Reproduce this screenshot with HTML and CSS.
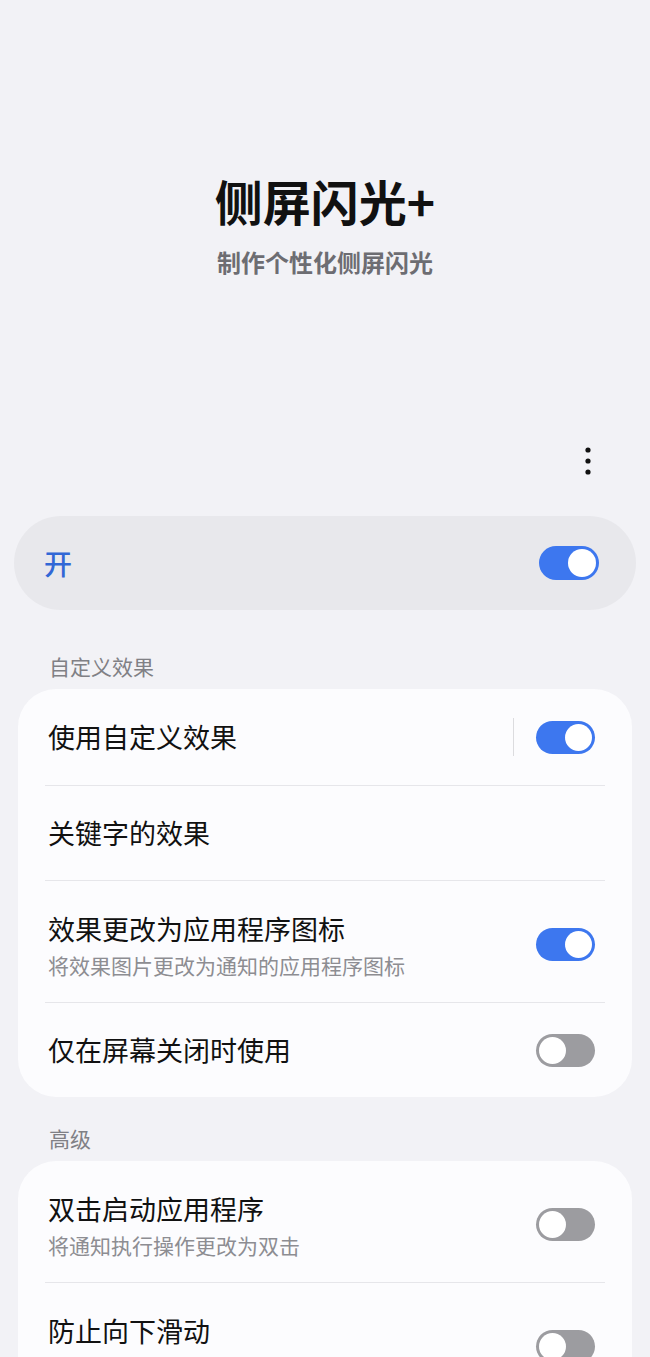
FILE: index.html
```html
<!DOCTYPE html>
<html lang="zh-CN">
<head>
  <meta charset="UTF-8">
  <meta name="viewport" content="width=device-width, initial-scale=1.0">
  <title>侧屏闪光+</title>
  <link rel="stylesheet" href="styles.css">
</head>
<body>
  <div class="hero">
    <h1>侧屏闪光+</h1>
    <p class="tagline">制作个性化侧屏闪光</p>
  </div>

  <div class="toolbar">
    <button class="more" aria-label="更多选项">
      <svg width="8" height="28" viewBox="0 0 8 28">
        <circle cx="4" cy="3" r="2.6" fill="#111"/>
        <circle cx="4" cy="14" r="2.6" fill="#111"/>
        <circle cx="4" cy="25" r="2.6" fill="#111"/>
      </svg>
    </button>
  </div>

  <div class="master">
    <span class="master-label">开</span>
    <span class="switch switch-big on"></span>
  </div>

  <div class="section-title">自定义效果</div>
  <div class="card">
    <div class="row">
      <div class="row-text">
        <div class="row-title">使用自定义效果</div>
      </div>
      <span class="split"></span>
      <span class="switch on"></span>
    </div>
    <div class="row">
      <div class="row-text">
        <div class="row-title">关键字的效果</div>
      </div>
    </div>
    <div class="row two">
      <div class="row-text">
        <div class="row-title">效果更改为应用程序图标</div>
        <div class="row-sub">将效果图片更改为通知的应用程序图标</div>
      </div>
      <span class="switch on"></span>
    </div>
    <div class="row">
      <div class="row-text">
        <div class="row-title">仅在屏幕关闭时使用</div>
      </div>
      <span class="switch"></span>
    </div>
  </div>

  <div class="section-title">高级</div>
  <div class="card">
    <div class="row two">
      <div class="row-text">
        <div class="row-title">双击启动应用程序</div>
        <div class="row-sub">将通知执行操作更改为双击</div>
      </div>
      <span class="switch"></span>
    </div>
    <div class="row two">
      <div class="row-text">
        <div class="row-title">防止向下滑动</div>
        <div class="row-sub">防止通知在屏幕上向下滑动</div>
      </div>
      <span class="switch"></span>
    </div>
  </div>
</body>
</html>
```

FILE: styles.css
```css
body {
  font-family: "Noto Sans CJK SC", "Noto Sans", sans-serif;
  margin: 0;
  background: #f2f2f6;
  color: #111;
  padding-bottom: 40px;
}
.hero {
  padding-top: 171px;
  text-align: center;
}
h1 {
  font-size: 48px;
  line-height: 58px;
  font-weight: 700;
  margin: 0;
}
.tagline {
  font-size: 24px;
  line-height: 30px;
  font-weight: 700;
  color: #6d6d72;
  margin: 18px 0 0;
}
.toolbar {
  display: flex;
  justify-content: flex-end;
  margin-top: 160px;
  padding-right: 50px;
  height: 48px;
}
.more {
  background: none;
  border: none;
  padding: 0 8px;
  display: flex;
  align-items: center;
  cursor: pointer;
}
.master {
  margin: 31px 14px 0;
  height: 94px;
  border-radius: 47px;
  background: #e8e8ec;
  display: flex;
  align-items: center;
  justify-content: space-between;
  padding: 0 37px 0 30px;
}
.master-label {
  font-size: 28px;
  color: #3167d6;
  font-weight: 500;
}
.section-title {
  font-size: 21px;
  line-height: 30px;
  color: #808085;
  padding-left: 49px;
  margin: 41px 0 8px;
}
.card + .section-title {
  margin-top: 26px;
}
.card {
  margin: 0 18px;
  background: #fcfcfe;
  border-radius: 38px;
  padding: 0 27px;
}
.row {
  display: flex;
  align-items: center;
  padding: 29px 10px 29px 3px;
  border-bottom: 1px solid #e6e6ea;
}
.row.two {
  padding-top: 30px;
  padding-bottom: 24px;
}
.row:last-child {
  border-bottom: none;
}
.row-text {
  flex: 1;
}
.row-title {
  font-size: 27px;
  line-height: 36px;
}
.row-sub {
  font-size: 21px;
  line-height: 26px;
  color: #8d8d92;
  margin-top: 5px;
}
.split {
  width: 1px;
  height: 38px;
  background: #dcdcdf;
  margin-right: 22px;
}
.switch {
  position: relative;
  width: 59px;
  height: 33px;
  border-radius: 17px;
  background: #9c9ca0;
  flex-shrink: 0;
}
.switch::after {
  content: "";
  position: absolute;
  top: 3px;
  left: 3px;
  width: 27px;
  height: 27px;
  border-radius: 50%;
  background: #fff;
}
.switch.on {
  background: #3d77ef;
}
.switch.on::after {
  left: auto;
  right: 3px;
}
.switch-big {
  width: 60px;
  height: 34px;
}
.switch-big::after {
  width: 28px;
  height: 28px;
}
```
